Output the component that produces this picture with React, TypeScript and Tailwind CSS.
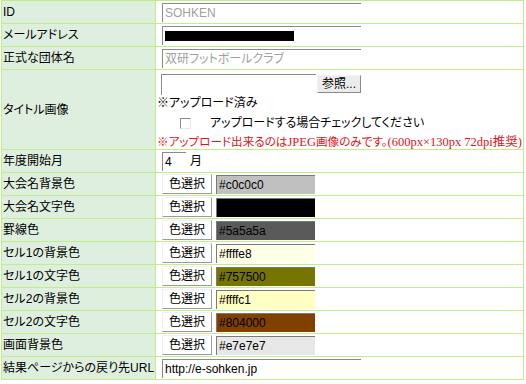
import React from "react";

const colorRows: [string, string][] = [
  ["大会名背景色", "#c0c0c0"],
  ["大会名文字色", "#000000"],
  ["罫線色", "#5a5a5a"],
  ["セル1の背景色", "#ffffe8"],
  ["セル1の文字色", "#757500"],
  ["セル2の背景色", "#ffffc1"],
  ["セル2の文字色", "#804000"],
  ["画面背景色", "#e7e7e7"],
];

function Label({ children }: { children: React.ReactNode }) {
  return (
    <div className="bg-[#dfefdf] flex items-center pl-px text-[12px] text-black whitespace-nowrap">
      {children}
    </div>
  );
}

function TextBox({ children, w, gray }: { children?: React.ReactNode; w: string; gray?: boolean }) {
  return (
    <div
      className={`${w} h-[19px] bg-white border-t border-l border-[#8a8a8a] flex items-center pl-[2px] text-[12px] whitespace-nowrap overflow-hidden ${
        gray ? "text-[#a0a0a0]" : "text-black"
      }`}
    >
      {children}
    </div>
  );
}

function ColorButton() {
  return (
    <div className="w-[50px] h-[20px] bg-white border border-t-[#f0f0f0] border-l-[#f0f0f0] border-r-[#9a9a9a] border-b-[#9a9a9a] flex items-center justify-center text-[12px] text-black">
      色選択
    </div>
  );
}

const serif = { fontFamily: '"Liberation Serif", "Noto Sans CJK JP", serif' };

export default function App() {
  return (
    <div
      className="bg-white w-[526px] h-[384px] text-black [font-feature-settings:'palt']"
      style={{ fontFamily: '"Liberation Sans", "Noto Sans CJK JP", sans-serif' }}
    >
      <div className="ml-px w-[523px] grid grid-cols-[153px_1fr] grid-rows-[22px_22px_22px_79px_repeat(10,22px)] gap-px bg-[#c0ef88] p-px">
        <Label>ID</Label>
        <div className="bg-white flex items-center pl-[6px]">
          <TextBox w="w-[199px]" gray>SOHKEN</TextBox>
        </div>

        <Label>メールアドレス</Label>
        <div className="bg-white flex items-center pl-[6px]">
          <TextBox w="w-[199px]">
            <div className="w-[129px] h-[10px] bg-black" />
          </TextBox>
        </div>

        <Label>正式な団体名</Label>
        <div className="bg-white flex items-center pl-[6px]">
          <TextBox w="w-[199px]" gray>双研フットボールクラブ</TextBox>
        </div>

        <Label>タイトル画像</Label>
        <div className="bg-white flex flex-col pl-px pt-[4px] text-[12px] overflow-hidden">
          <div className="h-[21px] flex items-start pl-[4px]">
            <div className="w-[155px] h-[21px] bg-white border-t border-l border-[#8a8a8a]" />
            <div className="ml-px mt-px w-[44px] h-[18px] bg-[#ececec] border border-t-[#f4f4f4] border-l-[#f4f4f4] border-r-[#8a8a8a] border-b-[#8a8a8a] flex items-center justify-center text-[12px]">
              参照...
            </div>
          </div>
          <div className="h-[16px] flex items-center leading-none">※アップロード済み</div>
          <div className="h-[24px] flex items-center">
            <div className="ml-[23px] w-[11px] h-[11px] bg-white border-t border-l border-[#8a8a8a] border-r border-b border-r-[#e8e8e8] border-b-[#e8e8e8]" />
            <span className="ml-[19px]">アップロードする場合チェックしてください</span>
          </div>
          <div className="h-[14px] flex items-center text-[#e0141c] whitespace-nowrap leading-none text-[11.6px]">
            <span>※アップロード出来るのは</span>
            <span style={serif} className="text-[12.5px]">JPEG</span>
            <span>画像のみです。</span>
            <span style={serif} className="text-[12.5px]">(600px×130px 72dpi推奨)</span>
          </div>
        </div>

        <Label>年度開始月</Label>
        <div className="bg-white flex items-center pl-[6px] text-[12px]">
          <TextBox w="w-[24px]">4</TextBox>
          <span className="ml-[4px]">月</span>
        </div>

        {colorRows.map(([label, hex]) => (
          <React.Fragment key={label}>
            <Label>{label}</Label>
            <div className="bg-white flex items-center pl-[6px]">
              <ColorButton />
              <div
                className="ml-[4px] w-[99px] h-[19px] border-t border-l border-[#7a7a7a] flex items-center pl-[2px] text-[12px] text-black"
                style={{ backgroundColor: hex }}
              >
                {hex}
              </div>
            </div>
          </React.Fragment>
        ))}

        <Label>結果ページからの戻り先URL</Label>
        <div className="bg-white flex items-center pl-[6px]">
          <TextBox w="w-[199px]">http://e-sohken.jp</TextBox>
        </div>
      </div>
    </div>
  );
}
